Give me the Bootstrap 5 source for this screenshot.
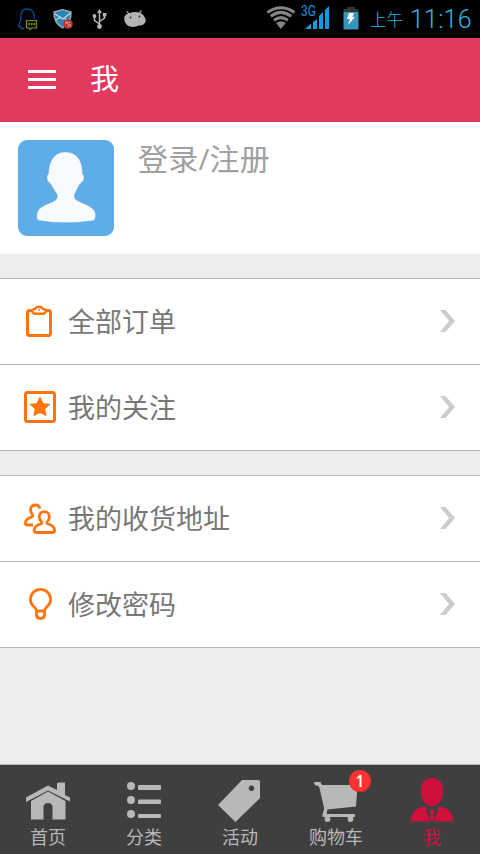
<!DOCTYPE html>
<html lang="zh-CN">
<head>
<meta charset="utf-8">
<meta name="viewport" content="width=device-width, initial-scale=1">
<title>我</title>
<link rel="stylesheet" href="https://cdn.jsdelivr.net/npm/bootstrap@5.3.0/dist/css/bootstrap.min.css">
<style>
body{font-family:"Open Sans","Noto Sans CJK SC",sans-serif;background:#ededed;height:854px;overflow:hidden}
svg{display:block;flex:none}
.statusbar{height:38px;background:#000;color:#33b5e5;font-family:Roboto,"Noto Sans CJK SC",sans-serif}
.statusbar .ampm{font-size:16.5px;line-height:38px;margin-left:10px;width:40px;padding-top:3px;font-weight:300}
.statusbar .clock{font-size:25px;line-height:38px;width:70px;letter-spacing:.2px;font-weight:300;padding-top:1px}
.titlebar{height:84px;background:#e2395f;color:#fff;border-bottom:1px solid #dc3459;padding:0 28px}
.titlebar h1{font-size:29px;line-height:1;margin:0 0 3px 34px;font-weight:400}
.profile{height:132px;padding:18px}
.profile .login{font-size:30px;line-height:38px;color:#a0a0a0;margin-left:24px;letter-spacing:.2px}
.menu{margin-top:24px;border-top:1px solid #b5b5b5}
.menu-row{height:86px;border-bottom:1px solid #b5b5b5;color:#777;font-size:27px;line-height:40px;padding:0 24px 1px;text-decoration:none}
.menu-row span{margin:2px 0 0 12px}
.tabbar{height:90px;background:#3f3f3f;border-top:1px solid #b5b5b5}
.tabbar a{color:#b8b8b8;fill:#b8b8b8;font-size:18px;line-height:26px;text-decoration:none;padding-top:9px}
.tabbar a.current{color:#d0103c;fill:#d0103c}
.count{left:61px;top:5px;width:22px;height:22px;line-height:23px;font-size:15.5px;background:#f33;font-weight:600;color:#fff;box-shadow:inset 0 -1px 1px #d22}
</style>
</head>
<body class="d-flex flex-column">
<div class="statusbar d-flex align-items-center">
  <svg width="260" height="38" viewBox="0 0 260 38">
    <path d="M24 28.500H21l-.8-2.600-1.200.8c-.8-1.400.4-4 1.800-6.200C20.500 12.500 22 9 27 9s7.500 3 7.500 10" fill="none" stroke="#084d91" stroke-width="1.300"/>
    <path d="M26.500 20.500h10v7.500h-5l-1.500 1.500-1-1.500h-2.500z" fill="#111" stroke="#76920e" stroke-width="1.200"/>
    <path d="M28.500 24h1.500m1 0h1.500m1 0h1.500" stroke="#9ab51c" stroke-width="1.300"/>
    <path d="M54 12q4-1 8.500-2.500Q67 11 71 12c.5 7-2 12-8.500 16C56 24 53.500 19 54 12z" fill="#2686b6" stroke="#a9adb0" stroke-width="1.300"/>
    <path d="M55 14l8 5 7.500-6M56 20l5-3m3 1 3 2" fill="none" stroke="#c7d6de" stroke-width="1.300"/>
    <circle cx="68" cy="24" r="4.800" fill="#bb2e28"/><path d="M65.500 24.500q.5-3 3.500-2.500l1.500 1m.2 1q-1 3-3.500 2.300M65 21.500l6 5" fill="none" stroke="#ccb0b0" stroke-width=".9"/>
    <g fill="none" stroke="#b4b4b4" stroke-width="1.500"><path d="M99.500 11v15M99.500 24l-5-3.500V16M99.500 21.500l5-3.500V14"/></g>
    <g fill="#b4b4b4"><path d="M97 13l2.500-4 2.500 4zM102.800 13h3.600v3.600h-3.600z"/><circle cx="94.500" cy="16" r="1.900"/><circle cx="99.500" cy="26.500" r="2.400"/></g>
    <path d="M127.500 11l1.800 2.200Q134 11.500 139 12.400l2-2.400.8.600-1.400 2.300c3 1.300 4.300 3.500 5.400 7.100-.5 4-2.800 5.500-6.800 5.500-1.500 0-2 .8-4 1.300-3.500.5-6-.4-7.500-1.300-2.500-2-3.300-5-3.300-7.500 0-2 1.600-3.200 3.800-4.200L126.500 11.600z" fill="#b4b4b4"/>
    <g fill="#222"><circle cx="130.500" cy="17.500" r=".9"/><circle cx="139.500" cy="16.500" r=".9"/></g>
  </svg>
  <svg width="100" height="38" viewBox="260 0 100 38">
    <g fill="none" stroke="#858585" stroke-width="3"><path d="M267.500 12.500q13.500-9.500 27 0"/><path d="M270.800 16.300q10-7.800 20.400 0"/><path d="M274 20.200q6.800-5.200 13.800 0"/></g>
    <path d="M276 23q5-3.500 9.800 0l-5 6z" fill="#858585"/>
    <text x="301" y="16" font-size="14" textLength="15" lengthAdjust="spacingAndGlyphs" fill="#0e9be5">3G</text>
    <path d="M305 29l6-5.500V29zM313 22l4-3v10h-4zM319 16l4-4v17h-4zM325 10l4-4v23h-4z" fill="#0e9be5"/>
    <path d="M343.500 9H347V7h8v2h3.500v3h-15z" fill="#343434"/><path d="M343.500 12h15v17.500h-15z" fill="#3894b8"/>
    <path d="M349 13h5l-1.500 4h2.500l-7 8 2-6h-3z" fill="#fff"/>
  </svg>
  <div class="ampm">上午</div><div class="clock">11:16</div>
</div>
<header class="titlebar d-flex align-items-center">
  <svg width="28" height="19" viewBox="0 0 28 19"><path d="M0 0h28v3H0zM0 8h28v3H0zM0 16h28v3H0z" fill="#fff"/></svg>
  <h1>我</h1>
</header>
<section class="profile bg-white d-flex align-items-start">
  <svg width="96" height="96" viewBox="18 140 96 96">
    <rect x="18" y="140" width="96" height="96" rx="9" fill="#5eace8"/>
    <path d="M38 220.500q28 4.500 56 0 2-2 1.500-7c-1-5-7-8-14-11-4-2-8-3-7-8 2-4 3-6 5-10 3-2 5-5 4.500-8-.2-2-1.500-2-1.500-3.500 0-13-6-21-17-21s-16.500 8-17 21c0 1.500-1.300 1.500-1.500 3.500-.5 3 1 6 4 8 2 4 3 5 6 10 1 4-1 6-6 8-8 3-13 6-14 11q-1 5 1 7z" fill="#f7fbff" stroke="#559dd4" stroke-width=".4"/>
  </svg>
  <div class="login">登录/注册</div>
</section>
<nav class="menu bg-white">
  <a class="menu-row d-flex align-items-center">
    <svg width="32" height="32" viewBox="0 0 32 32" fill="none" stroke="#ff750d"><rect x="3.500" y="5.500" width="23" height="25" rx="2" stroke-width="3"/><path d="M7 3.500h16L20 9H10z" fill="#fff" stroke="none"/><path d="M8 6q0-1.500 3-2 1-2.300 4-2.300t4 2.300q3 .5 3 2Q21 8.700 19 8.700h-8Q9 8.700 8 6z" fill="#fff" stroke-width="2.400"/><circle cx="15" cy="5" r="1" fill="#ff750d" stroke="none"/></svg>
    <span>全部订单</span>
    <svg class="ms-auto" width="16" height="22" viewBox="0 0 16 22"><path d="M0 0h5.500L15 11 5.500 22H0l9-11z" fill="#ccc"/></svg>
  </a>
  <a class="menu-row d-flex align-items-center">
    <svg width="32" height="32" viewBox="0 0 32 32"><rect x="1.500" y="1.500" width="29" height="29" rx="2" fill="none" stroke="#ff750d" stroke-width="3"/><path d="M16 5.300l3.300 6.600 7.200 1-5.200 5.200 1.400 7.200L16 22l-6.700 3.300 1.400-7.200-5.200-5.200 7.200-1z" fill="#ff750d"/></svg>
    <span>我的关注</span>
    <svg class="ms-auto" width="16" height="22" viewBox="0 0 16 22"><path d="M0 0h5.500L15 11 5.500 22H0l9-11z" fill="#ccc"/></svg>
  </a>
</nav>
<nav class="menu bg-white">
  <a class="menu-row d-flex align-items-center">
    <svg width="32" height="32" viewBox="0 0 32 32" fill="none" stroke="#ff750d" stroke-width="2.800"><path d="M9 23H3Q1 23 1.500 20.500 2 16.500 8 14.800q1.500-.8 0-2.600-2-3.200-1.200-6.200Q8 3 11.500 3q3.500 0 4.500 3.500"/><path d="M20.300 9.700c-3.300 0-5.200 2.400-5 5.400.1 2 1 3.600 2.300 4.900q.8 1.500-1 2-6 1.500-6.400 5.800Q10 30.500 12 30.500h16.500q2.200 0 2-2.700-.6-4.300-6.500-5.800-1.700-.5-.9-2c1.400-1.300 2.300-3 2.300-5 0-3-1.900-5.300-5.100-5.300z"/></svg>
    <span>我的收货地址</span>
    <svg class="ms-auto" width="16" height="22" viewBox="0 0 16 22"><path d="M0 0h5.500L15 11 5.500 22H0l9-11z" fill="#ccc"/></svg>
  </a>
  <a class="menu-row d-flex align-items-center">
    <svg width="32" height="32" viewBox="0 0 32 32" fill="none" stroke="#ff750d" stroke-width="2.800"><path d="M12.500 23q0-2-2.500-4.200c-2.200-2-3.600-4-3.600-7C6.400 6 10.500 1.400 16.500 1.400S26.600 6 26.600 11.800c0 3-1.400 5-3.600 7Q20.500 21 20.500 23zM12.500 23v4q0 3.500 4 3.500t4-3.500v-4"/><path d="M13.500 28.500h1.500m3 0h1.500" stroke-width="1.500"/></svg>
    <span>修改密码</span>
    <svg class="ms-auto" width="16" height="22" viewBox="0 0 16 22"><path d="M0 0h5.500L15 11 5.500 22H0l9-11z" fill="#ccc"/></svg>
  </a>
</nav>
<nav class="tabbar d-flex mt-auto">
  <a class="flex-fill w-100 d-flex flex-column align-items-center">
    <svg width="48" height="50" viewBox="24 774 48 50"><path d="M26 797.500L48 785.500l9 4.500V784q0-1.500 1.500-1.500h6.500v12.500l5 2.500v4L48 790.500 26 802z"/><path d="M31 801l17-9.500 17.500 9.500v18.500H52.500V806q-1-3-4.500-3t-4.500 3v13.500H31z"/></svg>
    首页</a>
  <a class="flex-fill w-100 d-flex flex-column align-items-center">
    <svg width="48" height="50" viewBox="120 774 48 50"><circle cx="131" cy="786" r="4"/><circle cx="131" cy="800" r="4"/><circle cx="131" cy="814" r="4"/><rect x="138" y="785" width="23" height="5" rx="1"/><rect x="138" y="799.500" width="23" height="4.500" rx="1"/><rect x="138" y="814" width="23" height="4" rx="1"/></svg>
    分类</a>
  <a class="flex-fill w-100 d-flex flex-column align-items-center">
    <svg width="48" height="50" viewBox="216 774 48 50"><path fill-rule="evenodd" d="M242 780h16q2 0 2 2v16l-24.500 24L218 805zm9.500 5.500a2.800 2.800 0 1 0 .01 0z"/></svg>
    活动</a>
  <a class="flex-fill w-100 d-flex flex-column align-items-center position-relative">
    <svg width="48" height="50" viewBox="312 774 48 50"><path d="M314 782h6.500l1.500 3h35.500l-1.500 21.500-28.500 3-1 4.500h28.500v3h-31.500q-1.500 0-1-2.500l1.700-6-4.700-20.500-1-2q-4.500 0-4.500-4z"/><circle cx="327.500" cy="819" r="2.900"/><circle cx="350.500" cy="819" r="2.900"/></svg>
    购物车<span class="count position-absolute rounded-circle text-center">1</span></a>
  <a class="current flex-fill w-100 d-flex flex-column align-items-center">
    <svg width="48" height="50" viewBox="408 774 48 50"><path d="M432 778c7 0 11 5 11 13 0 9-5 15-11 15s-11-6-11-15c0-8 4-13 11-13z"/><path d="M425 806l5 15.500h-19.500c1-8 3-12.500 14.500-15.500zM439 806l-5 15.500h19.500c-1-8-3-12.500-14.500-15.500z"/><path d="M430.500 809.500h3l.8 2-1 2 1 5-2.300 3-2.300-3 1-5-1-2z"/></svg>
    我</a>
</nav>
<script src="https://cdn.jsdelivr.net/npm/bootstrap@5.3.0/dist/js/bootstrap.bundle.min.js"></script>
</body>
</html>
